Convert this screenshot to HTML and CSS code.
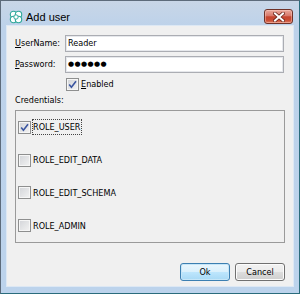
FILE: index.html
```html
<!DOCTYPE html>
<html>
<head>
<meta charset="utf-8">
<link rel="stylesheet" href="styles.css">
</head>
<body>
<div class="window">
  <div class="titlebar">
    <svg class="app-icon" width="14" height="14" viewBox="0 0 14 14">
      <g fill="#ffffff" stroke="#2fa89a" stroke-width="1.1">
        <circle cx="4.5" cy="4.5" r="3.2"/>
        <circle cx="9.5" cy="4.5" r="3.2"/>
        <circle cx="4.5" cy="9.5" r="3.2"/>
        <circle cx="9.5" cy="9.5" r="3.2"/>
      </g>
      <circle cx="7" cy="7" r="2.2" fill="#ffffff" stroke="#2fa89a" stroke-width="1"/>
    </svg>
    <span class="title">Add user</span>
    <div class="close">
      <svg width="12" height="10" viewBox="0 0 12 10">
        <path d="M2 1.5 L10 8.5 M10 1.5 L2 8.5" stroke="#6a2318" stroke-width="3.6" stroke-linecap="square"/>
        <path d="M2 1.5 L10 8.5 M10 1.5 L2 8.5" stroke="#ffffff" stroke-width="2" stroke-linecap="square"/>
      </svg>
    </div>
  </div>
  <div class="client">
    <div class="form">
      <label class="lbl"><u>U</u>serName:</label>
      <div class="input">Reader</div>
      <label class="lbl"><u>P</u>assword:</label>
      <div class="input pwd">●●●●●●</div>
      <span></span>
      <div class="check-row">
        <span class="cb"><svg width="11" height="11" viewBox="0 0 11 11"><path d="M2.2 5.6 L4.4 8.2 L9 2.2" fill="none" stroke="#3a55a0" stroke-width="1.6"/></svg></span>
        <span class="cb-text"><u>E</u>nabled</span>
      </div>
    </div>
    <div class="section-label">Credentials:</div>
    <div class="cred-box">
      <div class="cred-row">
        <span class="cb"><svg width="11" height="11" viewBox="0 0 11 11"><path d="M2.2 5.6 L4.4 8.2 L9 2.2" fill="none" stroke="#3a55a0" stroke-width="1.6"/></svg></span>
        <span class="cred-text focused">ROLE_USER</span>
      </div>
      <div class="cred-row">
        <span class="cb"></span>
        <span class="cred-text">ROLE_EDIT_DATA</span>
      </div>
      <div class="cred-row">
        <span class="cb"></span>
        <span class="cred-text">ROLE_EDIT_SCHEMA</span>
      </div>
      <div class="cred-row">
        <span class="cb"></span>
        <span class="cred-text">ROLE_ADMIN</span>
      </div>
    </div>
    <div class="buttons">
      <div class="btn default">Ok</div>
      <div class="btn">Cancel</div>
    </div>
  </div>
</div>
</body>
</html>
```
FILE: styles.css
```css
html, body {
  margin: 0;
  padding: 0;
}
body {
  width: 300px;
  height: 294px;
  overflow: hidden;
  font-family: "DejaVu Sans Condensed", "DejaVu Sans", sans-serif;
  font-stretch: condensed;
  font-size: 9px;
  color: #000;
}
.window {
  box-sizing: border-box;
  width: 300px;
  height: 294px;
  border: 1px solid #5d6b7b;
  border-right-color: #2a6c7c;
  border-bottom-color: #2a6c7c;
  background: linear-gradient(#c8d6e7, #bdd2ea 26px, #bcd3ec);
  display: flex;
  flex-direction: column;
  padding: 0 6px 7px 6px;
}
.titlebar {
  box-sizing: border-box;
  height: 25px;
  flex: none;
  display: flex;
  align-items: flex-start;
}
.app-icon {
  margin: 9px 0 0 2px;
  flex: none;
}
.title {
  font-family: "Liberation Sans", Arial, sans-serif;
  font-stretch: normal;
  font-size: 11px;
  margin: 10px 0 0 3px;
  line-height: 13px;
  flex: 1;
}
.close {
  box-sizing: border-box;
  width: 29px;
  height: 15px;
  margin: 8px 0 0 0;
  border: 1px solid #6e3228;
  border-radius: 3px;
  background: linear-gradient(#eaa99c, #d8786a 45%, #c6452f 52%, #c94c33 78%, #dd7b62);
  display: flex;
  align-items: center;
  justify-content: center;
  box-shadow: inset 0 0 0 1px rgba(255, 210, 200, 0.45);
}
.client {
  flex: 1;
  background: #f0f0f0;
  box-shadow: 0 0 0 1px #dde8f4;
  padding: 9px 9px 0 8px;
  display: flex;
  flex-direction: column;
}
.form {
  display: grid;
  grid-template-columns: 50px 1fr;
  row-gap: 4px;
  align-items: center;
}
.lbl {
  line-height: 13px;
}
.input {
  box-sizing: border-box;
  height: 17px;
  border: 1px solid #abadb3;
  box-shadow: inset 0 0 0 1px #e6e8ec;
  background: #fff;
  padding: 0 2px;
  line-height: 15px;
}
.input.pwd {
  font-family: "DejaVu Sans", sans-serif;
  font-stretch: normal;
  font-size: 7px;
  letter-spacing: 0.4px;
  line-height: 15px;
}
.check-row {
  height: 14px;
  display: flex;
  align-items: center;
  gap: 2px;
  padding-left: 1px;
}
.cb {
  box-sizing: border-box;
  width: 13px;
  height: 13px;
  flex: none;
  border: 1px solid #8e8f8f;
  background: linear-gradient(135deg, #d2d4d8, #f3f3f3);
  box-shadow: inset 0 0 0 1px #f6f6f6;
  display: flex;
  align-items: center;
  justify-content: center;
}
.cb svg {
  display: block;
}
.section-label {
  margin-top: 3px;
  line-height: 13px;
}
.cred-box {
  box-sizing: border-box;
  margin-top: 3px;
  margin-right: -1px;
  height: 133px;
  border: 1px solid #9a9a9a;
  padding: 0 0 0 2px;
  display: flex;
  flex-direction: column;
}
.cred-row {
  height: 33px;
  display: flex;
  align-items: center;
  gap: 1px;
}
.cred-text {
  border: 1px dotted transparent;
  line-height: 14px;
  padding: 0 1px 0 0;
}
.cred-text.focused {
  border-color: #444;
}
.buttons {
  margin-top: 20px;
  display: flex;
  justify-content: flex-end;
  gap: 5px;
  margin-right: -1px;
}
.btn {
  box-sizing: border-box;
  width: 50px;
  height: 18px;
  border: 1px solid #707070;
  border-radius: 3px;
  background: linear-gradient(#f2f2f2, #ebebeb 50%, #dddddd 50%, #cfcfcf);
  box-shadow: inset 0 0 0 1px #fcfcfc;
  display: flex;
  align-items: center;
  justify-content: center;
  line-height: 14px;
}
.btn.default {
  border-color: #3c7fb1;
  background: linear-gradient(#eaf6fd, #d9f0fc 50%, #bee6fd 50%, #a7d9f5);
  box-shadow: inset 0 0 0 1px #c6e6f8;
}
```
